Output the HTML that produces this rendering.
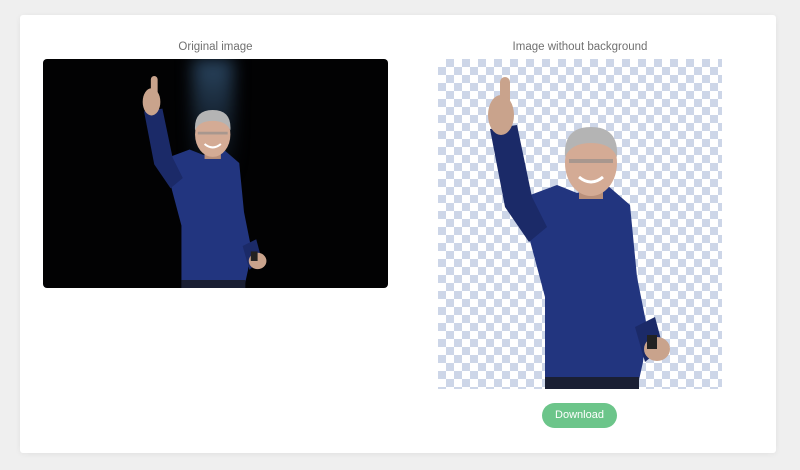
<!DOCTYPE html>
<html><head><style>
html,body{margin:0;padding:0;width:800px;height:470px;background:#efefef;overflow:hidden;font-family:"Liberation Sans",sans-serif}
.card{position:absolute;left:20px;top:15px;width:756px;height:438px;background:#fff;border-radius:3px;box-shadow:0 1px 6px rgba(0,0,0,.06)}
.lbl{position:absolute;font-size:11.5px;color:#707070;text-align:center}
.orig{position:absolute;left:43px;top:59px;width:345px;height:229px;background:#020203;border-radius:4px;overflow:hidden}
.check{position:absolute;left:438px;top:59px;width:284px;height:330px;background-color:#fff;
background-image:linear-gradient(45deg,#cdd6e8 25%,transparent 25%,transparent 75%,#cdd6e8 75%),linear-gradient(45deg,#cdd6e8 25%,transparent 25%,transparent 75%,#cdd6e8 75%);
background-size:16px 16px;background-position:0 0,8px 8px;overflow:hidden}
.btn{position:absolute;left:542px;top:403px;width:75px;height:25px;border-radius:13px;background:#6cc58a;color:#fff;font-size:11px;text-align:center;line-height:25px}
</style></head><body>
<div class="card"></div>
<div class="lbl" style="left:43px;width:345px;top:41px">Original image</div>
<div class="lbl" style="left:438px;width:284px;top:41px">Image without background</div>
<svg width="0" height="0" style="position:absolute"><defs>
<g id="p">
<path d="M38 120 L70 108 L90 116 L120 108 L143 128 L150 200 L160 250 L156 285 L150 312 L58 312 L58 220 L42 160 Z" fill="#22357f"/>
<path d="M3 52 L30 48 L45 120 L60 150 L42 165 L18 130 Z" fill="#1b2a68"/>
<rect x="13" y="0" width="10" height="28" rx="5" fill="#c9a38c"/>
<ellipse cx="14" cy="38" rx="13" ry="20" fill="#c9a38c"/>
<rect x="92" y="100" width="24" height="22" fill="#b98f7a"/>
<ellipse cx="104" cy="86" rx="26" ry="33" fill="#d4ab95"/>
<path d="M78 80 Q76 50 104 50 Q132 50 130 80 Q124 66 104 66 Q84 66 78 80Z" fill="#b4b4b4"/>
<rect x="82" y="82" width="44" height="4" fill="#8a8a8a" opacity=".6"/>
<path d="M92 100 Q104 110 116 100" stroke="#fff" stroke-width="3" fill="none"/>
<path d="M148 250 L168 240 L176 270 L158 285Z" fill="#1b2a68"/>
<ellipse cx="170" cy="272" rx="13" ry="12" fill="#c9a38c"/>
<rect x="160" y="258" width="10" height="14" fill="#222"/>
<rect x="58" y="300" width="94" height="12" fill="#1a1f33"/>
</g></defs></svg>
<div class="orig">
<div style="position:absolute;left:150px;top:0;width:40px;height:120px;background:linear-gradient(#2a4560,rgba(20,40,60,0));filter:blur(8px)"></div>
<svg width="345" height="229" style="position:absolute;left:0;top:0"><use href="#p" transform="translate(99,17) scale(0.68)"/></svg>
</div>
<div class="check"><svg width="284" height="330" style="position:absolute;left:0;top:0"><use href="#p" transform="translate(49,18)"/></svg></div>
<div class="btn">Download</div>
</body></html>
